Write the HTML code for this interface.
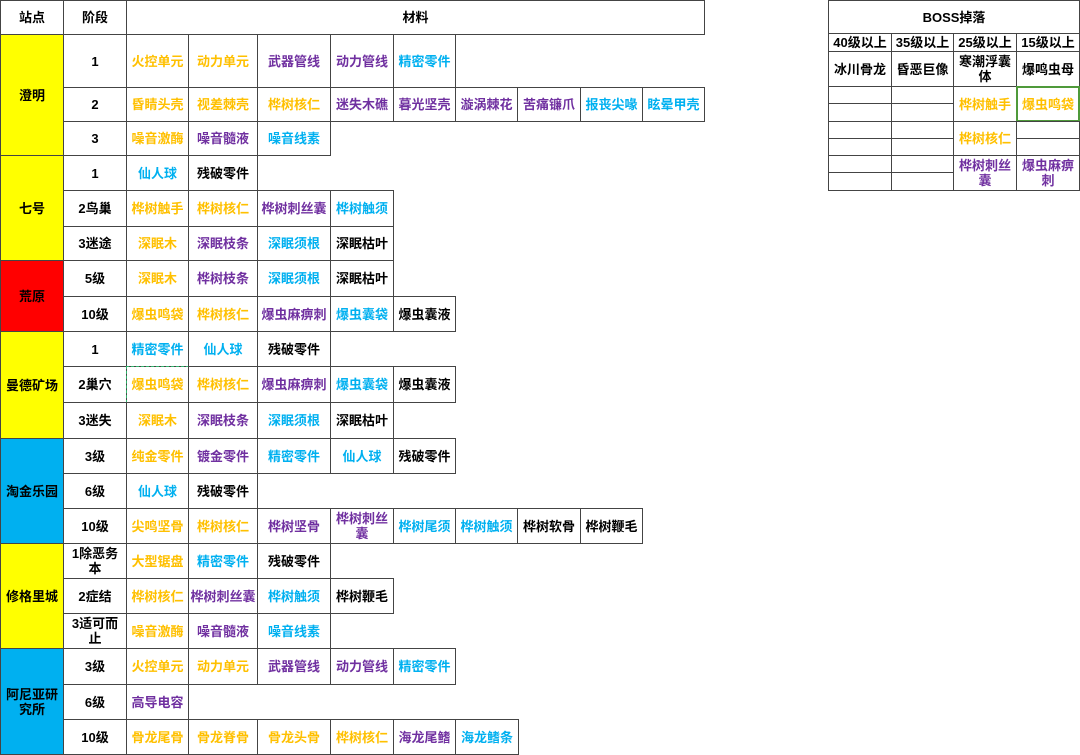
<!DOCTYPE html>
<html><head><meta charset="utf-8"><style>
body{margin:0;width:1080px;height:754px;background:#fff;position:relative;overflow:hidden;font-family:"Liberation Sans","Noto Sans CJK SC",sans-serif;font-weight:bold;font-size:13px;}
.c{position:absolute;box-sizing:border-box;border:1px solid #444;display:flex;align-items:center;justify-content:center;text-align:center;line-height:15px;color:#000;white-space:nowrap;}
.o{color:#ffc000}.p{color:#7030a0}.b{color:#00b0f0}
.y{background:#ffff00}.r{background:#ff0000}.bl{background:#00b0f0}
</style></head><body>
<div class="c" style="left:0;top:0;width:64px;height:35px">站点</div>
<div class="c" style="left:63px;top:0;width:64px;height:35px">阶段</div>
<div class="c" style="left:126px;top:0;width:579px;height:35px">材料</div>

<div class="c y" style="left:0;top:34px;width:64px;height:122px">澄明</div>
<div class="c y" style="left:0;top:155px;width:64px;height:106px">七号</div>
<div class="c r" style="left:0;top:260px;width:64px;height:72px">荒原</div>
<div class="c y" style="left:0;top:331px;width:64px;height:108px">曼德矿场</div>
<div class="c bl" style="left:0;top:438px;width:64px;height:106px">淘金乐园</div>
<div class="c y" style="left:0;top:543px;width:64px;height:106px">修格里城</div>
<div class="c bl" style="left:0;top:648px;width:64px;height:107px">阿尼亚研<br>究所</div>

<div class="c" style="left:63px;top:34px;width:64px;height:54px">1</div>
<div class="c o" style="left:126px;top:34px;width:63px;height:54px">火控单元</div>
<div class="c o" style="left:188px;top:34px;width:70px;height:54px">动力单元</div>
<div class="c p" style="left:257px;top:34px;width:74px;height:54px">武器管线</div>
<div class="c p" style="left:330px;top:34px;width:64px;height:54px">动力管线</div>
<div class="c b" style="left:393px;top:34px;width:63px;height:54px">精密零件</div>

<div class="c" style="left:63px;top:87px;width:64px;height:35px">2</div>
<div class="c o" style="left:126px;top:87px;width:63px;height:35px">昏睛头壳</div>
<div class="c o" style="left:188px;top:87px;width:70px;height:35px">视差棘壳</div>
<div class="c o" style="left:257px;top:87px;width:74px;height:35px">桦树核仁</div>
<div class="c p" style="left:330px;top:87px;width:64px;height:35px">迷失木礁</div>
<div class="c p" style="left:393px;top:87px;width:63px;height:35px">暮光坚壳</div>
<div class="c p" style="left:455px;top:87px;width:63px;height:35px">漩涡棘花</div>
<div class="c p" style="left:517px;top:87px;width:64px;height:35px">苦痛镰爪</div>
<div class="c b" style="left:580px;top:87px;width:63px;height:35px">报丧尖喙</div>
<div class="c b" style="left:642px;top:87px;width:63px;height:35px">眩晕甲壳</div>

<div class="c" style="left:63px;top:121px;width:64px;height:35px">3</div>
<div class="c o" style="left:126px;top:121px;width:63px;height:35px">噪音激酶</div>
<div class="c p" style="left:188px;top:121px;width:70px;height:35px">噪音髓液</div>
<div class="c b" style="left:257px;top:121px;width:74px;height:35px">噪音线素</div>

<div class="c" style="left:63px;top:155px;width:64px;height:36px">1</div>
<div class="c b" style="left:126px;top:155px;width:63px;height:36px">仙人球</div>
<div class="c" style="left:188px;top:155px;width:70px;height:36px">残破零件</div>

<div class="c" style="left:63px;top:190px;width:64px;height:37px">2鸟巢</div>
<div class="c o" style="left:126px;top:190px;width:63px;height:37px">桦树触手</div>
<div class="c o" style="left:188px;top:190px;width:70px;height:37px">桦树核仁</div>
<div class="c p" style="left:257px;top:190px;width:74px;height:37px">桦树刺丝囊</div>
<div class="c b" style="left:330px;top:190px;width:64px;height:37px">桦树触须</div>

<div class="c" style="left:63px;top:226px;width:64px;height:35px">3迷途</div>
<div class="c o" style="left:126px;top:226px;width:63px;height:35px">深眠木</div>
<div class="c p" style="left:188px;top:226px;width:70px;height:35px">深眠枝条</div>
<div class="c b" style="left:257px;top:226px;width:74px;height:35px">深眠须根</div>
<div class="c" style="left:330px;top:226px;width:64px;height:35px">深眠枯叶</div>

<div class="c" style="left:63px;top:260px;width:64px;height:37px">5级</div>
<div class="c o" style="left:126px;top:260px;width:63px;height:37px">深眠木</div>
<div class="c p" style="left:188px;top:260px;width:70px;height:37px">桦树枝条</div>
<div class="c b" style="left:257px;top:260px;width:74px;height:37px">深眠须根</div>
<div class="c" style="left:330px;top:260px;width:64px;height:37px">深眠枯叶</div>

<div class="c" style="left:63px;top:296px;width:64px;height:36px">10级</div>
<div class="c o" style="left:126px;top:296px;width:63px;height:36px">爆虫鸣袋</div>
<div class="c o" style="left:188px;top:296px;width:70px;height:36px">桦树核仁</div>
<div class="c p" style="left:257px;top:296px;width:74px;height:36px">爆虫麻痹刺</div>
<div class="c b" style="left:330px;top:296px;width:64px;height:36px">爆虫囊袋</div>
<div class="c" style="left:393px;top:296px;width:63px;height:36px">爆虫囊液</div>

<div class="c" style="left:63px;top:331px;width:64px;height:36px">1</div>
<div class="c b" style="left:126px;top:331px;width:63px;height:36px">精密零件</div>
<div class="c b" style="left:188px;top:331px;width:70px;height:36px">仙人球</div>
<div class="c" style="left:257px;top:331px;width:74px;height:36px">残破零件</div>

<div class="c" style="left:63px;top:366px;width:64px;height:37px">2巢穴</div>
<div class="c o" style="left:126px;top:366px;width:63px;height:37px;border:1px dashed #2fb36a">爆虫鸣袋</div>
<div class="c o" style="left:188px;top:366px;width:70px;height:37px">桦树核仁</div>
<div class="c p" style="left:257px;top:366px;width:74px;height:37px">爆虫麻痹刺</div>
<div class="c b" style="left:330px;top:366px;width:64px;height:37px">爆虫囊袋</div>
<div class="c" style="left:393px;top:366px;width:63px;height:37px">爆虫囊液</div>

<div class="c" style="left:63px;top:402px;width:64px;height:37px">3迷失</div>
<div class="c o" style="left:126px;top:402px;width:63px;height:37px">深眠木</div>
<div class="c p" style="left:188px;top:402px;width:70px;height:37px">深眠枝条</div>
<div class="c b" style="left:257px;top:402px;width:74px;height:37px">深眠须根</div>
<div class="c" style="left:330px;top:402px;width:64px;height:37px">深眠枯叶</div>

<div class="c" style="left:63px;top:438px;width:64px;height:36px">3级</div>
<div class="c o" style="left:126px;top:438px;width:63px;height:36px">纯金零件</div>
<div class="c p" style="left:188px;top:438px;width:70px;height:36px">镀金零件</div>
<div class="c b" style="left:257px;top:438px;width:74px;height:36px">精密零件</div>
<div class="c b" style="left:330px;top:438px;width:64px;height:36px">仙人球</div>
<div class="c" style="left:393px;top:438px;width:63px;height:36px">残破零件</div>

<div class="c" style="left:63px;top:473px;width:64px;height:36px">6级</div>
<div class="c b" style="left:126px;top:473px;width:63px;height:36px">仙人球</div>
<div class="c" style="left:188px;top:473px;width:70px;height:36px">残破零件</div>

<div class="c" style="left:63px;top:508px;width:64px;height:36px">10级</div>
<div class="c o" style="left:126px;top:508px;width:63px;height:36px">尖鸣坚骨</div>
<div class="c o" style="left:188px;top:508px;width:70px;height:36px">桦树核仁</div>
<div class="c p" style="left:257px;top:508px;width:74px;height:36px">桦树坚骨</div>
<div class="c p" style="left:330px;top:508px;width:64px;height:36px">桦树刺丝<br>囊</div>
<div class="c b" style="left:393px;top:508px;width:63px;height:36px">桦树尾须</div>
<div class="c b" style="left:455px;top:508px;width:63px;height:36px">桦树触须</div>
<div class="c" style="left:517px;top:508px;width:64px;height:36px">桦树软骨</div>
<div class="c" style="left:580px;top:508px;width:63px;height:36px">桦树鞭毛</div>

<div class="c" style="left:63px;top:543px;width:64px;height:36px">1除恶务<br>本</div>
<div class="c o" style="left:126px;top:543px;width:63px;height:36px">大型锯盘</div>
<div class="c b" style="left:188px;top:543px;width:70px;height:36px">精密零件</div>
<div class="c" style="left:257px;top:543px;width:74px;height:36px">残破零件</div>

<div class="c" style="left:63px;top:578px;width:64px;height:36px">2症结</div>
<div class="c o" style="left:126px;top:578px;width:63px;height:36px">桦树核仁</div>
<div class="c p" style="left:188px;top:578px;width:70px;height:36px">桦树刺丝囊</div>
<div class="c b" style="left:257px;top:578px;width:74px;height:36px">桦树触须</div>
<div class="c" style="left:330px;top:578px;width:64px;height:36px">桦树鞭毛</div>

<div class="c" style="left:63px;top:613px;width:64px;height:36px">3适可而<br>止</div>
<div class="c o" style="left:126px;top:613px;width:63px;height:36px">噪音激酶</div>
<div class="c p" style="left:188px;top:613px;width:70px;height:36px">噪音髓液</div>
<div class="c b" style="left:257px;top:613px;width:74px;height:36px">噪音线素</div>

<div class="c" style="left:63px;top:648px;width:64px;height:37px">3级</div>
<div class="c o" style="left:126px;top:648px;width:63px;height:37px">火控单元</div>
<div class="c o" style="left:188px;top:648px;width:70px;height:37px">动力单元</div>
<div class="c p" style="left:257px;top:648px;width:74px;height:37px">武器管线</div>
<div class="c p" style="left:330px;top:648px;width:64px;height:37px">动力管线</div>
<div class="c b" style="left:393px;top:648px;width:63px;height:37px">精密零件</div>

<div class="c" style="left:63px;top:684px;width:64px;height:36px">6级</div>
<div class="c p" style="left:126px;top:684px;width:63px;height:36px">高导电容</div>

<div class="c" style="left:63px;top:719px;width:64px;height:36px">10级</div>
<div class="c o" style="left:126px;top:719px;width:63px;height:36px">骨龙尾骨</div>
<div class="c o" style="left:188px;top:719px;width:70px;height:36px">骨龙脊骨</div>
<div class="c o" style="left:257px;top:719px;width:74px;height:36px">骨龙头骨</div>
<div class="c o" style="left:330px;top:719px;width:64px;height:36px">桦树核仁</div>
<div class="c p" style="left:393px;top:719px;width:63px;height:36px">海龙尾鳍</div>
<div class="c b" style="left:455px;top:719px;width:64px;height:36px">海龙鳍条</div>

<div class="c" style="left:828px;top:0;width:252px;height:34px">BOSS掉落</div>
<div class="c" style="left:828px;top:33px;width:64px;height:19px">40级以上</div>
<div class="c" style="left:891px;top:33px;width:63px;height:19px">35级以上</div>
<div class="c" style="left:953px;top:33px;width:64px;height:19px">25级以上</div>
<div class="c" style="left:1016px;top:33px;width:64px;height:19px">15级以上</div>
<div class="c" style="left:828px;top:51px;width:64px;height:36px">冰川骨龙</div>
<div class="c" style="left:891px;top:51px;width:63px;height:36px">昏恶巨像</div>
<div class="c" style="left:953px;top:51px;width:64px;height:36px">寒潮浮囊<br>体</div>
<div class="c" style="left:1016px;top:51px;width:64px;height:36px">爆鸣虫母</div>

<div class="c" style="left:828px;top:86px;width:64px;height:18px"></div>
<div class="c" style="left:828px;top:103px;width:64px;height:19px"></div>
<div class="c" style="left:828px;top:121px;width:64px;height:18px"></div>
<div class="c" style="left:828px;top:138px;width:64px;height:18px"></div>
<div class="c" style="left:828px;top:155px;width:64px;height:18px"></div>
<div class="c" style="left:828px;top:172px;width:64px;height:19px"></div>
<div class="c" style="left:891px;top:86px;width:63px;height:18px"></div>
<div class="c" style="left:891px;top:103px;width:63px;height:19px"></div>
<div class="c" style="left:891px;top:121px;width:63px;height:18px"></div>
<div class="c" style="left:891px;top:138px;width:63px;height:18px"></div>
<div class="c" style="left:891px;top:155px;width:63px;height:18px"></div>
<div class="c" style="left:891px;top:172px;width:63px;height:19px"></div>

<div class="c o" style="left:953px;top:86px;width:64px;height:36px">桦树触手</div>
<div class="c o" style="left:953px;top:121px;width:64px;height:35px">桦树核仁</div>
<div class="c p" style="left:953px;top:155px;width:64px;height:36px">桦树刺丝<br>囊</div>

<div class="c o" style="left:1016px;top:86px;width:64px;height:36px;border:2px solid #4f9a3a">爆虫鸣袋</div>
<div class="c" style="left:1016px;top:121px;width:64px;height:18px"></div>
<div class="c" style="left:1016px;top:138px;width:64px;height:18px"></div>
<div class="c p" style="left:1016px;top:155px;width:64px;height:36px">爆虫麻痹<br>刺</div>
</body></html>
